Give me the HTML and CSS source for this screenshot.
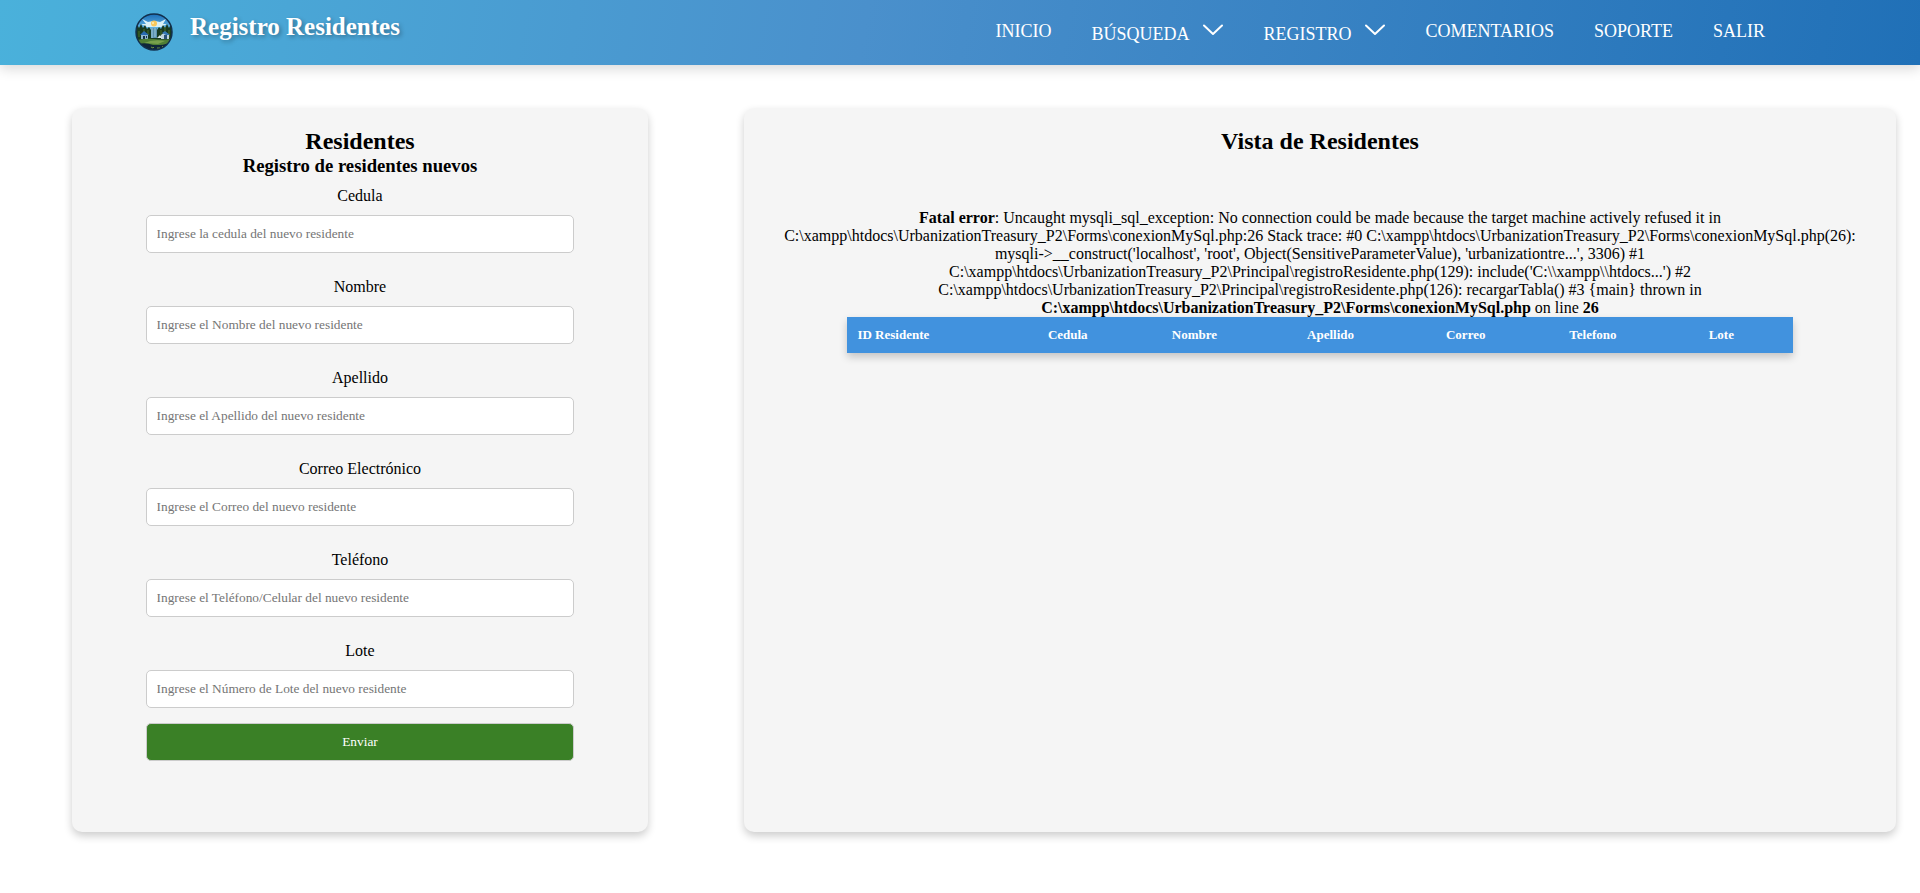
FILE: index.html
```html
<!DOCTYPE html>
<html lang="es">
<head>
<meta charset="utf-8">
<title>Registro Residentes</title>
<link rel="stylesheet" href="styles.css">
</head>
<body>
<header class="topbar">
  <div class="brand">
    <svg class="logo" viewBox="0 0 38 38" aria-hidden="true">
      <defs>
        <clipPath id="disc"><circle cx="19" cy="19" r="18"/></clipPath>
        <linearGradient id="sky" x1="0" y1="0" x2="0" y2="1">
          <stop offset="0" stop-color="#1668b4"/>
          <stop offset="1" stop-color="#6fc4ee"/>
        </linearGradient>
      </defs>
      <g clip-path="url(#disc)">
        <rect width="38" height="38" fill="#14303a"/>
        <rect width="38" height="18" fill="url(#sky)"/>
        <path d="M7 6l6 3 5-1 2 0 5 1 6-3-3 5 4 0-6 3H12l-6-3h5z" fill="#d8f0f6"/>
        <circle cx="19" cy="10.500" r="3" fill="#f8c85c"/>
        <circle cx="18" cy="10" r="1" fill="#fff0b8"/>
        <path d="M0 14l2-3 2 4 2-4 2 4 2-3 2 4 2-2 2 3h6l2-3 2 2 2-4 2 3 2-4 2 4 2-4 2 3v14H0z" fill="#183a20"/>
        <path d="M4 18v6M9 16v7M13 17v5M26 17v5M30 14v6M34 17v8" stroke="#4c7024" stroke-width="1"/>
        <path d="M16 15h6v10h-6z" fill="#5b91ae"/>
        <path d="M17 15v10M20 15v9" stroke="#9bc8db" stroke-width="1"/>
        <path d="M6 22l3-3 4 3v4H6z" fill="#8fb6cc"/>
        <path d="M5 22l4-4 5 4z" fill="#286ab0"/>
        <path d="M8 23h2v3H8zM11 23h1v2h-1z" fill="#15314c"/>
        <path d="M26 22l4-3 4 3v4h-8z" fill="#bcd2dc"/>
        <path d="M27 20l3-2 5 4h-4z" fill="#3478b5"/>
        <path d="M29 22h3v4h-3z" fill="#2b5376"/>
        <path d="M22 25l3-3 2 3z" fill="#d6e7e7"/>
        <path d="M2 27q9-2 17-1t17 0v6H4z" fill="#4f7e35"/>
        <path d="M9 30q9-4 21-2l-7 3z" fill="#78a04c"/>
        <path d="M3 31q8-2 15 1 8 1 16-2v8H3z" fill="#10263a"/>
        <path d="M16 34l2 1 1-1M22 35h3M27 33l1 1" fill="none" stroke="#6f9440" stroke-width="1"/>
      </g>
      <circle cx="19" cy="19" r="18" fill="none" stroke="#12304e" stroke-width="1.5"/>
    </svg>
    <h1 class="brand-name">Registro Residentes</h1>
  </div>
  <nav class="nav">
    <a class="nav-item" href="#">INICIO</a>
    <button class="nav-item nav-menu" type="button"><span class="nav-label">BÚSQUEDA</span><svg class="chevron" viewBox="0 0 20 20" aria-hidden="true"><path d="M1 1.5l9 8.500 9-8.500"/></svg></button>
    <button class="nav-item nav-menu" type="button"><span class="nav-label">REGISTRO</span><svg class="chevron" viewBox="0 0 20 20" aria-hidden="true"><path d="M1 1.5l9 8.500 9-8.500"/></svg></button>
    <a class="nav-item" href="#">COMENTARIOS</a>
    <a class="nav-item" href="#">SOPORTE</a>
    <a class="nav-item" href="#">SALIR</a>
  </nav>
</header>
<main class="content">
  <section class="card">
    <h2>Residentes</h2>
    <h3>Registro de residentes nuevos</h3>
    <form class="form">
      <div class="field"><label for="cedula">Cedula</label><input id="cedula" type="text" placeholder="Ingrese la cedula del nuevo residente"></div>
      <div class="field"><label for="nombre">Nombre</label><input id="nombre" type="text" placeholder="Ingrese el Nombre del nuevo residente"></div>
      <div class="field"><label for="apellido">Apellido</label><input id="apellido" type="text" placeholder="Ingrese el Apellido del nuevo residente"></div>
      <div class="field"><label for="correo">Correo Electrónico</label><input id="correo" type="email" placeholder="Ingrese el Correo del nuevo residente"></div>
      <div class="field"><label for="telefono">Teléfono</label><input id="telefono" type="tel" placeholder="Ingrese el Teléfono/Celular del nuevo residente"></div>
      <div class="field"><label for="lote">Lote</label><input id="lote" type="text" placeholder="Ingrese el Número de Lote del nuevo residente"></div>
      <button class="submit" type="submit">Enviar</button>
    </form>
  </section>
  <section class="card">
    <h2>Vista de Residentes</h2>
    <p class="error"><b>Fatal error</b>: Uncaught mysqli_sql_exception: No connection could be made because the target machine actively refused it in C:\xampp\htdocs\UrbanizationTreasury_P2\Forms\conexionMySql.php:26 Stack trace: #0 C:\xampp\htdocs\UrbanizationTreasury_P2\Forms\conexionMySql.php(26): mysqli-&gt;__construct('localhost', 'root', Object(SensitiveParameterValue), 'urbanizationtre...', 3306) #1 C:\xampp\htdocs\UrbanizationTreasury_P2\Principal\registroResidente.php(129): include('C:\\xampp\\htdocs...') #2 C:\xampp\htdocs\UrbanizationTreasury_P2\Principal\registroResidente.php(126): recargarTabla() #3 {main} thrown in <b>C:\xampp\htdocs\UrbanizationTreasury_P2\Forms\conexionMySql.php</b> on line <b>26</b></p>
    <table class="residents">
      <thead>
        <tr><th>ID Residente</th><th>Cedula</th><th>Nombre</th><th>Apellido</th><th>Correo</th><th>Telefono</th><th>Lote</th></tr>
      </thead>
    </table>
  </section>
</main>
</body>
</html>
```

FILE: styles.css
```css
* {
  box-sizing: border-box;
  margin: 0;
  padding: 0;
}

body {
  background: #fff;
  color: #000;
  font-family: "Liberation Serif", "Times New Roman", serif;
  font-size: 16px;
  line-height: 18px;
}

.topbar {
  display: flex;
  justify-content: space-between;
  align-items: flex-start;
  padding: 13px 155px 14px 135px;
  background: linear-gradient(100deg, #4ab1db, #4a90cc 45%, #2070b7);
  box-shadow: 0 4px 12px rgba(0, 0, 0, 0.15);
}

.brand {
  display: flex;
  align-items: flex-start;
  gap: 17px;
}

.logo {
  display: block;
  width: 38px;
  height: 38px;
}

.brand-name {
  color: #fff;
  font-size: 25px;
  line-height: 28px;
  text-shadow: 2px 2px 4px rgba(0, 0, 0, 0.3);
}

.nav {
  display: flex;
  align-items: center;
  gap: 40px;
  padding-top: 4px;
}

.nav-item {
  color: #fff;
  font-family: inherit;
  font-size: 18px;
  line-height: 20px;
  text-decoration: none;
}

.nav-menu {
  display: flex;
  align-items: flex-start;
  gap: 14px;
  border: 0;
  background: none;
  cursor: pointer;
}

.nav-label {
  padding-top: 7px;
}

.chevron {
  width: 20px;
  height: 20px;
  margin-top: 7px;
  fill: none;
  stroke: #fff;
  stroke-width: 2;
  stroke-linecap: round;
  stroke-linejoin: round;
}

.content {
  display: grid;
  grid-template-columns: 1fr 2fr;
  gap: 96px;
  padding: 43px 24px 43px 72px;
}

.card {
  padding: 20px 20px 71px;
  border-radius: 10px;
  background: #f5f5f5;
  box-shadow: 0 4px 8px rgba(0, 0, 0, 0.2);
  text-align: center;
}

h2 {
  font-size: 24px;
  line-height: 27px;
}

h3 {
  line-height: 21px;
}

.form {
  display: flex;
  flex-direction: column;
  gap: 25px;
  width: 80%;
  margin: 11px auto 0;
}

.field {
  display: flex;
  flex-direction: column;
  gap: 10px;
}

.field input,
.submit {
  width: 100%;
  height: 38px;
  padding: 10px;
  border: 1px solid #ccc;
  border-radius: 5px;
  font-family: inherit;
}

.field input {
  background: #fff;
}

.submit {
  margin-top: -10px;
  background: #3a8026;
  color: #fff;
  cursor: pointer;
}

.error {
  margin-top: 54px;
}

.residents {
  width: 85%;
  margin: 0 auto;
  border-collapse: collapse;
  box-shadow: 0 4px 8px rgba(0, 0, 0, 0.2);
}

.residents th {
  padding: 10px;
  background: #4192de;
  color: #fff;
  font-size: 13px;
  line-height: 16px;
  text-align: left;
}
```
